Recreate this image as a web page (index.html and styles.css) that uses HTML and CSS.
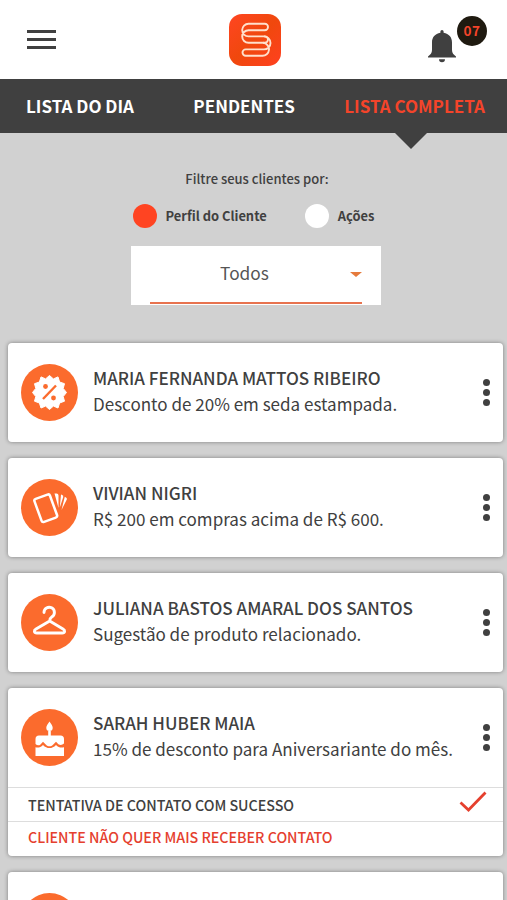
FILE: index.html
```html
<!DOCTYPE html>
<html lang="pt-BR">
<head>
  <meta charset="UTF-8">
  <meta name="viewport" content="width=device-width, initial-scale=1.0">
  <title>Lista Completa</title>
  <link rel="stylesheet" href="styles.css">
</head>
<body>
  <header class="topbar">
    <div class="menu">
      <span></span>
      <span></span>
      <span></span>
    </div>
    <svg class="logo" viewBox="0 0 52 52">
      <defs>
        <linearGradient id="logoBg" x1="0" y1="0" x2="1" y2="1">
          <stop offset="0" stop-color="#ff4522"/>
          <stop offset="0.5" stop-color="#f0480d"/>
          <stop offset="1" stop-color="#ff4020"/>
        </linearGradient>
      </defs>
      <rect width="52" height="52" rx="13" fill="url(#logoBg)"/>
      <g fill="none" stroke="#ffe0cc" stroke-width="1.900">
        <path d="M19.500 9.800 H35.800 a3.200 3.200 0 0 1 0 6.400 H19.500 a6.300 6.300 0 0 0 0 12.600 H35.800 a3.200 3.200 0 0 0 0 -6.400 H19.500 a6.300 6.300 0 0 1 0 -12.600z"/>
        <path d="M35 22.400 a6.500 6.500 0 0 1 0 13 H16.700 a3.200 3.200 0 0 0 0 6.400 H33 a6.500 6.500 0 0 0 1 -13"/>
      </g>
    </svg>
    <div class="alerts">
      <svg class="bell" viewBox="0 0 28 33">
        <path fill="#404040" d="M14 0 a1.600 1.600 0 0 1 1.600 1.600 v1.200 c5.400 1 8.400 4.500 8.400 9.700 v7.500 c0 3 1.500 4.500 4 6.500 v1 H0 v-1 c2.500 -2 4 -3.500 4 -6.500 v-7.500 C4 7.300 7 3.800 12.400 2.800 V1.600 a1.600 1.600 0 0 1 1.600 -1.600z M11 29.300 h6 a3 3 0 0 1 -6 0z"/>
      </svg>
      <span class="badge">07</span>
    </div>
  </header>

  <nav class="tabs">
    <a class="tab">LISTA DO DIA</a>
    <a class="tab">PENDENTES</a>
    <a class="tab active">LISTA COMPLETA</a>
  </nav>

  <section class="filter">
    <p class="filter-title">Filtre seus clientes por:</p>
    <div class="options">
      <label class="option"><span class="radio checked"></span>Perfil do Cliente</label>
      <label class="option"><span class="radio"></span>Ações</label>
    </div>
    <div class="select">
      <div class="select-value">Todos<span class="arrow"></span></div>
    </div>
  </section>

  <main class="list">
    <article class="card">
      <div class="client">
        <svg class="icon" viewBox="0 0 57 57">
          <circle cx="28.500" cy="28.500" r="28.500" fill="#fb6b2d"/>
          <path fill="#fff" stroke="#fff" stroke-width="1" stroke-linejoin="round" d="M28.500 11.500 L32.400 14.900 L37 12.900 L38.600 18 L43.500 19.700 L42.200 24.400 L45.500 28.500 L42.200 32.600 L43.500 37.200 L38.600 39 L37 44 L32.400 42.100 L28.500 45.500 L24.600 42.100 L20 44 L18.400 39 L13.500 37.200 L14.800 32.600 L11.500 28.500 L14.800 24.400 L13.500 19.700 L18.400 18 L20 12.900 L24.600 14.900Z"/>
          <g fill="#fb6b2d">
            <circle cx="24.500" cy="22.500" r="2.400"/>
            <circle cx="32.500" cy="34" r="2.400"/>
          </g>
          <path stroke="#fb6b2d" stroke-width="2.400" d="M22 35 L35 21.500"/>
        </svg>
        <div class="info">
          <h2>MARIA FERNANDA MATTOS RIBEIRO</h2>
          <p>Desconto de 20% em seda estampada.</p>
        </div>
        <div class="more"><span></span><span></span><span></span></div>
      </div>
    </article>

    <article class="card">
      <div class="client">
        <svg class="icon" viewBox="0 0 57 57">
          <circle cx="28.500" cy="28.500" r="28.500" fill="#fb6b2d"/>
          <rect x="16.500" y="17" width="16.500" height="24.500" rx="2" transform="rotate(-20 24.700 29.200)" fill="none" stroke="#fff" stroke-width="2.500"/>
          <path fill="#fff" d="M33.500 14.500 h2 a2 2 0 0 1 2 2 V29z M40 15.500 l1.200 .5 a1.800 1.800 0 0 1 1 2.200 L38.800 28.500z M43.800 17.800 l1.200 .6 a1.800 1.800 0 0 1 .8 2.200 L40.500 31z"/>
        </svg>
        <div class="info">
          <h2>VIVIAN NIGRI</h2>
          <p>R$ 200 em compras acima de R$ 600.</p>
        </div>
        <div class="more"><span></span><span></span><span></span></div>
      </div>
    </article>

    <article class="card">
      <div class="client">
        <svg class="icon" viewBox="0 0 57 57">
          <circle cx="28.500" cy="28.500" r="28.500" fill="#fb6b2d"/>
          <path fill="none" stroke="#fff" stroke-width="2.900" stroke-linecap="round" stroke-linejoin="round" d="M23 18.500 a5.200 5.200 0 1 1 8 4.300 c-1.500 1 -2.300 2 -2.300 4.200 L15 35 c-2.500 1.500 -2 4 .8 4 H41.200 c2.800 0 3.300 -2.500 .8 -4 L28.700 27"/>
        </svg>
        <div class="info">
          <h2>JULIANA BASTOS AMARAL DOS SANTOS</h2>
          <p>Sugestão de produto relacionado.</p>
        </div>
        <div class="more"><span></span><span></span><span></span></div>
      </div>
    </article>

    <article class="card">
      <div class="client">
        <svg class="icon" viewBox="0 0 57 57">
          <circle cx="28.500" cy="28.500" r="28.500" fill="#fb6b2d"/>
          <g fill="#fff">
            <path d="M28.500 12.500 c2 3 3.200 4.500 3.200 6.200 a3.200 3.200 0 0 1 -6.400 0 c0 -1.700 1.200 -3.200 3.200 -6.200z"/>
            <path d="M27.200 22 h2.600 v5 h-2.600z"/>
            <path d="M18 26.500 H39.500 a3.500 3.500 0 0 1 3.500 3.500 V34.500 c-2.500 2.200 -5 1.800 -7 -.8 l-1 -1 -3 3 c-2 2 -5 2 -7 0 l-3 -3 -2.500 2.700 c-1.500 1.300 -3.500 1 -5 -.4 V30 a3.500 3.500 0 0 1 3.500 -3.500z"/>
            <path d="M14.500 38.200 c2.500 1 5 .2 7.500 -2.300 c4 4.200 9 4.200 13 0 c2.500 2.500 5 3.300 8 2.300 V47 H14.500z"/>
          </g>
        </svg>
        <div class="info">
          <h2>SARAH HUBER MAIA</h2>
          <p>15% de desconto para Aniversariante do mês.</p>
        </div>
        <div class="more"><span></span><span></span><span></span></div>
      </div>
      <div class="status">
        TENTATIVA DE CONTATO COM SUCESSO
        <svg class="check" viewBox="0 0 28 22">
          <path fill="none" stroke="#e5402e" stroke-width="2.800" d="M1.500 11.500 L9.500 19 L26.500 1.500"/>
        </svg>
      </div>
      <div class="status refused">CLIENTE NÃO QUER MAIS RECEBER CONTATO</div>
    </article>

    <article class="card">
      <div class="client">
        <svg class="icon" viewBox="0 0 57 57">
          <circle cx="28.500" cy="28.500" r="28.500" fill="#fb6b2d"/>
        </svg>
      </div>
    </article>
  </main>
</body>
</html>
```
FILE: styles.css
```css
* {
  box-sizing: border-box;
}

body {
  margin: 0;
  height: 100vh;
  display: flex;
  flex-direction: column;
  background: #d1d1d1;
  color: #404040;
  font-family: "Noto Sans CJK SC", "Noto Sans", sans-serif;
}

h2, p {
  margin: 0;
}

/* topo */
.topbar {
  flex: none;
  height: 79px;
  background: white;
  display: grid;
  grid-template-columns: 1fr 52px 1fr;
  align-items: center;
  padding-left: 2px;
}

.menu {
  margin-left: 25px;
  width: 29px;
  display: flex;
  flex-direction: column;
  gap: 5px;
}

.menu span {
  height: 3px;
  background: #404040;
}

.logo {
  width: 52px;
  height: 52px;
}

.alerts {
  display: flex;
  justify-content: flex-end;
  align-items: flex-start;
  padding-right: 20px;
  height: 63px;
}

.bell {
  width: 28px;
  height: 33px;
  margin: 22px 1px 0 0;
}

.badge {
  width: 30px;
  height: 30px;
  margin-top: 8px;
  border-radius: 50%;
  background: #1f1a10;
  color: #f4442a;
  font-size: 13.5px;
  font-weight: bold;
  line-height: 28px;
  letter-spacing: 0.5px;
  text-align: center;
}

/* abas */
.tabs {
  flex: none;
  height: 54px;
  background: #404040;
  display: flex;
  justify-content: space-between;
  padding: 0 22px 0 26px;
}

.tab {
  position: relative;
  color: white;
  font-size: 17px;
  font-weight: bold;
  line-height: 53px;
  white-space: nowrap;
}

.tab:nth-child(2) {
  padding-left: 10px;
}

.tab.active {
  color: #f4442a;
}

.tab.active::after {
  content: "";
  position: absolute;
  top: 54px;
  left: 51px;
  border: 16px solid transparent;
  border-top-color: #404040;
  border-bottom: 0;
}

/* filtro */
.filter {
  flex: none;
  height: 205px;
  padding-top: 36px;
  display: flex;
  flex-direction: column;
  align-items: center;
}

.filter-title {
  font-size: 13px;
  font-weight: 500;
  line-height: 20px;
  padding-left: 7px;
}

.options {
  display: flex;
  gap: 38px;
  margin-top: 15px;
}

.option {
  display: flex;
  align-items: center;
  gap: 9px;
  font-size: 12.9px;
  font-weight: bold;
  line-height: 24px;
}

.radio {
  width: 24px;
  height: 24px;
  border-radius: 50%;
  background: white;
}

.radio.checked {
  background: #ff4422;
}

.select {
  width: 250px;
  height: 59px;
  margin: 18px 0 0 5px;
  padding: 0 19px;
  background: white;
}

.select-value {
  position: relative;
  height: 58px;
  padding-right: 23px;
  border-bottom: 2px solid #e8734f;
  color: #555;
  font-size: 17.3px;
  line-height: 54px;
  text-align: center;
}

.arrow {
  position: absolute;
  right: 0;
  top: 26px;
  border: 6px solid transparent;
  border-top: 5px solid #e57a3c;
  border-bottom: 0;
}

/* lista */
.list {
  flex: 1;
  min-height: 0;
  overflow: hidden;
  padding: 5px 4px 0 8px;
}

.card {
  margin-bottom: 16px;
  background: white;
  border-radius: 4px;
  box-shadow: 0 0 4px rgba(0,0,0,0.4);
}

.client {
  height: 99px;
  padding: 0 13px;
  display: flex;
  align-items: center;
}

.icon {
  width: 57px;
  height: 57px;
}

.info {
  flex: 1;
  margin-left: 15px;
  padding-bottom: 4px;
  white-space: nowrap;
}

.info h2 {
  font-size: 17.1px;
  font-weight: 500;
  line-height: 26px;
}

.info p {
  font-size: 17.05px;
  line-height: 26px;
}

.more {
  display: flex;
  flex-direction: column;
  gap: 3px;
  width: 7px;
}

.more span {
  height: 7px;
  border-radius: 50%;
  background: #404040;
}

.status {
  height: 34px;
  padding: 0 16px 0 20px;
  border-top: 1px solid #ddd;
  display: flex;
  justify-content: space-between;
  align-items: center;
  font-size: 14.25px;
  font-weight: 500;
  line-height: 33px;
}

.status.refused {
  height: 35px;
  line-height: 28px;
  align-items: flex-start;
  padding-top: 1px;
  color: #e5402e;
}

.check {
  width: 28px;
  height: 22px;
  margin-bottom: 5px;
}
```
